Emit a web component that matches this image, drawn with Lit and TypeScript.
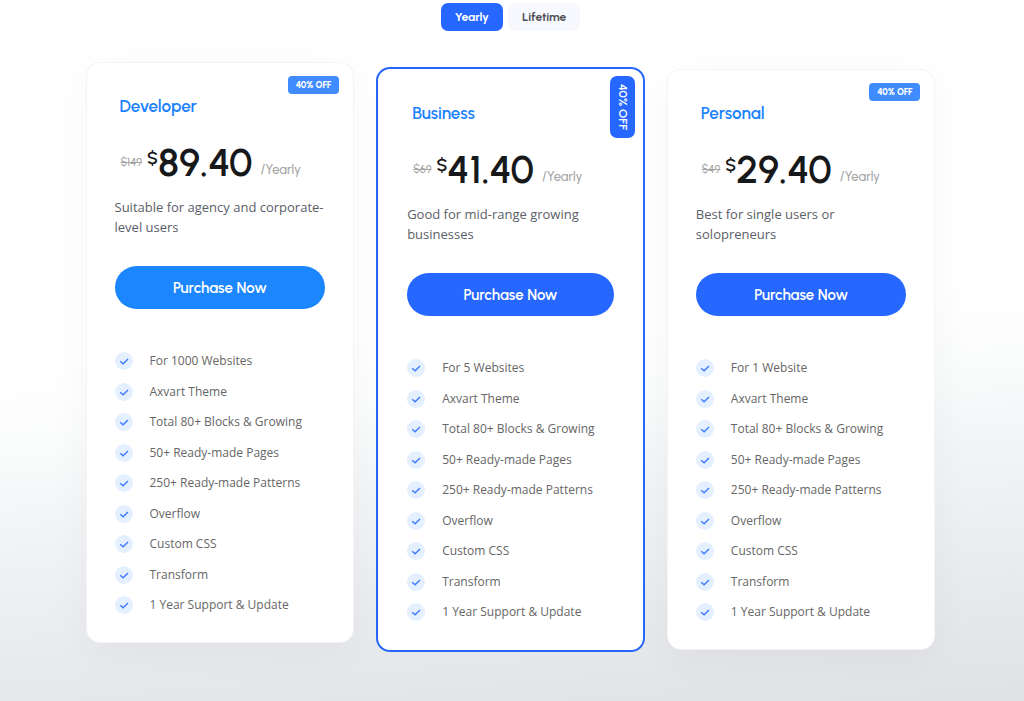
import { LitElement, html, css } from "lit";
import { customElement, property, state } from "lit/decorators.js";
import { classMap } from "lit/directives/class-map.js";

interface Plan {
  id: string;
  name: string;
  was: string;
  price: string;
  about: string;
  sites: string;
  look: "raised" | "featured" | "plain";
}

const plans: Plan[] = [
  { id: "developer", name: "Developer", was: "$149", price: "89.40", about: "Suitable for agency and corporate-level users", sites: "For 1000 Websites", look: "raised" },
  { id: "business", name: "Business", was: "$69", price: "41.40", about: "Good for mid-range growing businesses", sites: "For 5 Websites", look: "featured" },
  { id: "personal", name: "Personal", was: "$49", price: "29.40", about: "Best for single users or solopreneurs", sites: "For 1 Website", look: "plain" },
];

const sharedFeatures = [
  "Axvart Theme",
  "Total 80+ Blocks & Growing",
  "50+ Ready-made Pages",
  "250+ Ready-made Patterns",
  "Overflow",
  "Custom CSS",
  "Transform",
  "1 Year Support & Update",
];

@customElement("plan-card")
class PlanCard extends LitElement {
  @property({ attribute: false }) plan!: Plan;
  @property() period = "Yearly";

  static styles = css`
    :host {
      display: block;
      min-width: 0;
    }
    .card {
      position: relative;
      box-sizing: border-box;
      padding: 31px 28px 28px;
      border: 1px solid #f4f4f5;
      border-radius: 14px;
      background: #fff;
      box-shadow: 0 10px 40px rgba(0, 0, 0, 0.04);
      font-family: "Urbanist", Lato, sans-serif;
    }
    .raised {
      transform: translateY(-7px);
    }
    .featured {
      padding: 32px 29px 29px;
      border: 2px solid #2768fa;
      box-shadow: none;
    }
    .badge {
      position: absolute;
      top: 13px;
      right: 14px;
      padding: 0 8px;
      border-radius: 4px;
      background: #408cff;
      color: #fff;
      font-size: 9px;
      line-height: 18px;
      font-weight: 800;
    }
    .featured .badge {
      top: 7px;
      right: 8px;
      padding: 8px 0;
      border-radius: 7px;
      background: #2667ff;
      font-size: 12px;
      line-height: 25px;
      font-weight: 600;
      writing-mode: vertical-rl;
    }
    .name {
      margin: 0 5px;
      color: #1a82ff;
      font-size: 17px;
      line-height: 24px;
      font-weight: 600;
    }
    .price {
      display: flex;
      height: 40px;
      margin: 24px 0 15px 6px;
      color: #17181a;
    }
    .was {
      margin-right: 5px;
      color: #a3a3a3;
      font-size: 11px;
      line-height: 42px;
      font-weight: 500;
    }
    .sign {
      font-size: 18px;
      line-height: 32px;
      font-weight: 600;
    }
    .amount {
      font-size: 39px;
      line-height: 42px;
      font-weight: 600;
    }
    .per {
      margin-left: 8px;
      color: #a3a3a3;
      font-size: 13px;
      line-height: 56px;
      font-weight: 500;
    }
    .about {
      margin: 0 0 29px;
      color: #5a5e69;
      font: 13px/20px "Open Sans", sans-serif;
    }
    .buy {
      display: block;
      width: 100%;
      height: 43px;
      padding: 0;
      border: 0;
      border-radius: 22px;
      background: #2667ff;
      color: #fff;
      font: 600 15px/20px "Urbanist", Lato, sans-serif;
      cursor: pointer;
    }
    .raised .buy {
      background: #1c86ff;
    }
    .features {
      display: flex;
      flex-direction: column;
      justify-content: space-between;
      min-height: 262px;
      margin: 43px 0 0;
      padding: 0;
      list-style: none;
      color: #666;
      font: 12px/18px "Open Sans", sans-serif;
    }
    .feature {
      display: flex;
      align-items: center;
      gap: 17px;
    }
    .tick {
      flex: none;
      width: 18px;
      height: 18px;
    }
  `;

  render() {
    const p = this.plan;
    return html`
      <article class=${classMap({ card: true, [p.look]: true })}>
        <span class="badge">40% OFF</span>
        <h2 class="name">${p.name}</h2>
        <div class="price">
          <s class="was">${p.was}</s><span class="sign">$</span><span class="amount">${p.price}</span><span class="per">/${this.period}</span>
        </div>
        <p class="about">${p.about}</p>
        <button class="buy" type="button">Purchase Now</button>
        <ul class="features">
          ${[p.sites, ...sharedFeatures].map(
            (text) => html`<li class="feature">
              <svg class="tick" viewBox="0 0 18 18" aria-hidden="true">
                <circle cx="9" cy="9" r="9" fill="#e4f0ff" />
                <path d="M5.2 9.2 8.1 11.8 13 7" fill="none" stroke="#3d7bff" stroke-width="1.4" />
              </svg>
              <span>${text}</span>
            </li>`
          )}
        </ul>
      </article>
    `;
  }
}

@customElement("app-root")
class AppRoot extends LitElement {
  @state() period = "Yearly";

  static styles = css`
    :host {
      display: block;
      box-sizing: border-box;
      min-height: 100vh;
      padding: 3px 25px 48px 22px;
      background: linear-gradient(175deg, #fff 47%, #fbfcfc 56%, #f3f4f6 67%, #dfe1e5 100%);
    }
    .switch {
      display: flex;
      justify-content: center;
      gap: 5px;
      margin-bottom: 36px;
    }
    .tab {
      height: 28px;
      padding: 0 14px;
      border: 0;
      border-radius: 7px;
      background: #f8f9ff;
      color: #505156;
      font: 700 12px/28px "Urbanist", Lato, sans-serif;
      cursor: pointer;
    }
    .tab.active {
      background: #2667ff;
      color: #fff;
    }
    .plans {
      display: grid;
      grid-template-columns: repeat(auto-fit, minmax(250px, 1fr));
      align-items: center;
      gap: 22px;
      max-width: 850px;
      margin: 0 auto;
    }
  `;

  render() {
    return html`
      <nav class="switch" aria-label="Billing period">
        ${["Yearly", "Lifetime"].map(
          (name) => html`<button
            type="button"
            class=${classMap({ tab: true, active: this.period === name })}
            aria-pressed=${this.period === name ? "true" : "false"}
            @click=${() => (this.period = name)}
          >${name}</button>`
        )}
      </nav>
      <main class="plans">
        ${plans.map((plan) => html`<plan-card .plan=${plan} .period=${this.period}></plan-card>`)}
      </main>
    `;
  }
}
